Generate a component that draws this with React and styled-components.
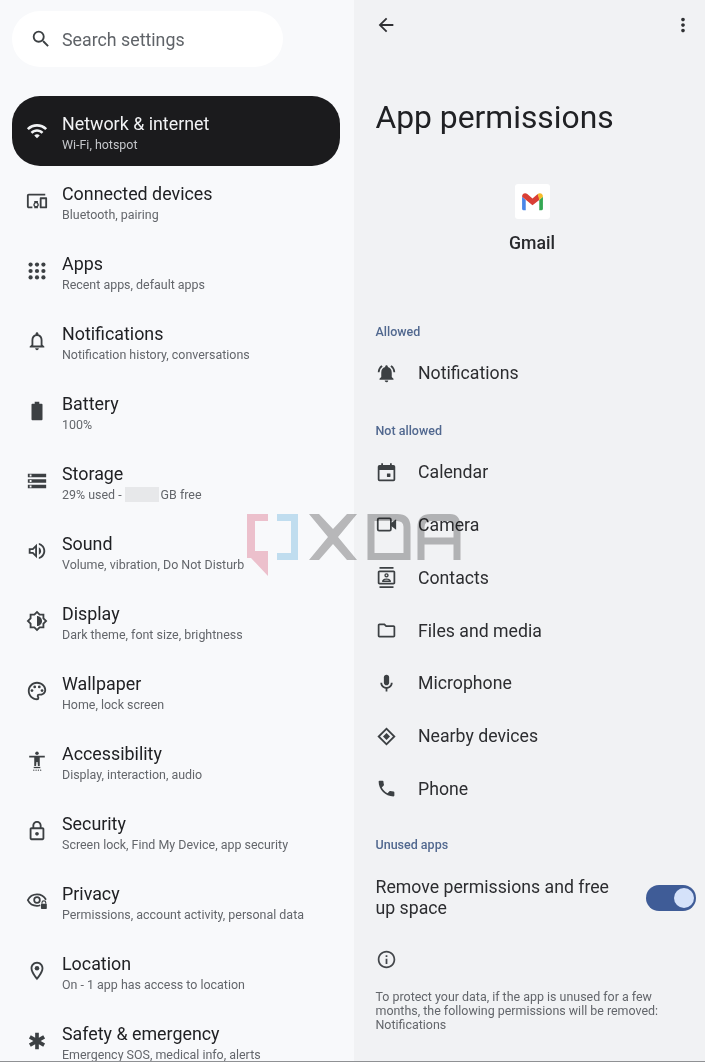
import React from 'react';
import styled, { createGlobalStyle } from 'styled-components';
import {
	MdSearch,
	MdWifi,
	MdOutlineDevicesOther,
	MdNotificationsNone,
	MdStorage,
	MdOutlineVolumeUp,
	MdOutlineBrightness6,
	MdOutlinePalette,
	MdOutlineLock,
	MdOutlineLocationOn,
	MdEmergency,
	MdArrowBack,
	MdMoreVert,
	MdNotificationsActive,
	MdOutlineContacts,
	MdOutlineFolder,
	MdOutlineMic,
	MdPhone,
	MdInfoOutline,
} from 'react-icons/md';

const GlobalStyle = createGlobalStyle`
	html, body {
		margin: 0;
		padding: 0;
		background: #f8f9fb;
	}
	body {
		font-family: Roboto, 'Liberation Sans', sans-serif;
	}
`;

const Screen = styled.div`
	position: relative;
	display: flex;
	width: 705px;
	height: 1062px;
	overflow: hidden;
	box-sizing: border-box;
	border-bottom: 1px solid #8f9194;
	filter: blur(0.35px);
`;

const ListPane = styled.div`
	width: 354px;
	flex-shrink: 0;
	background: #f8f9fb;
	padding: 11px 14px 0 12px;
	box-sizing: border-box;
`;

const SearchBar = styled.div`
	display: flex;
	align-items: center;
	width: 271px;
	height: 56px;
	margin-bottom: 29px;
	padding-left: 18px;
	gap: 10px;
	box-sizing: border-box;
	border-radius: 28px;
	background: #ffffff;
	color: #5f6368;
	font-size: 17.8px;

	svg {
		width: 22px;
		height: 22px;
		color: #3c4043;
	}
`;

const SettingRow = styled.div`
	display: flex;
	align-items: center;
	height: 70px;
	padding-left: 13px;
	gap: 13px;
	box-sizing: border-box;
	border-radius: 28px;
	background: ${(p) => (p.$active ? '#1b1b1d' : 'transparent')};
	color: ${(p) => (p.$active ? '#f1f2f4' : '#202124')};
`;

const RowIcon = styled.span`
	display: flex;
	align-items: center;
	justify-content: center;
	width: 24px;
	height: 24px;
	flex-shrink: 0;
	color: ${(p) => (p.$active ? '#f1f2f4' : '#3c4043')};

	svg {
		width: 22px;
		height: 22px;
	}
`;

const RowText = styled.div`
	display: flex;
	flex-direction: column;
	margin-top: 2px;
`;

const RowTitle = styled.div`
	font-size: 17.85px;
	line-height: 24px;
`;

const RowSub = styled.div`
	display: flex;
	align-items: center;
	font-size: 12.45px;
	line-height: 17px;
	color: ${(p) => (p.$active ? '#c4c6ca' : '#63666b')};
`;

const Redacted = styled.span`
	display: inline-block;
	width: 34px;
	height: 15px;
	margin: 0 2px 0 3px;
	background: #e7e8ea;
`;

const DetailPane = styled.div`
	flex: 1;
	background: #f1f2f4;
	padding-left: 21.5px;
	box-sizing: border-box;
`;

const TopBar = styled.div`
	display: flex;
	align-items: center;
	justify-content: space-between;
	height: 50px;
	margin-left: -0.5px;
	padding-right: 11px;
	color: #303134;

	svg {
		width: 22px;
		height: 22px;
	}
`;

const PageTitle = styled.h1`
	margin: 47px 0 0;
	font-size: 31.8px;
	font-weight: 400;
	line-height: 40px;
	color: #202124;
`;

const AppHeader = styled.div`
	display: flex;
	flex-direction: column;
	align-items: center;
	margin: 47px 0 0 -16.5px;
`;

const AppIconBox = styled.div`
	display: flex;
	align-items: center;
	justify-content: center;
	width: 35px;
	height: 35px;
	border-radius: 3px;
	background: #ffffff;
`;

const AppName = styled.div`
	margin-top: 13px;
	font-size: 17.7px;
	font-weight: 500;
	line-height: 22px;
	color: #28292c;
`;

const SectionLabel = styled.div`
	margin: ${(p) => p.$top}px 0 7px;
	font-size: 12.5px;
	font-weight: 500;
	line-height: 16px;
	color: #51688f;
`;

const PermissionRow = styled.div`
	display: flex;
	align-items: center;
	height: 52.8px;
	gap: 21.5px;
	font-size: 17.7px;
	color: #2c2d30;

	svg {
		width: 21px;
		height: 21px;
		color: #3c4043;
		flex-shrink: 0;
	}
`;

const SwitchRow = styled.div`
	display: flex;
	align-items: center;
	justify-content: space-between;
	margin-top: 24px;
	padding-right: 9px;
`;

const SwitchLabel = styled.div`
	width: 250px;
	font-size: 17.7px;
	line-height: 21px;
	color: #2c2d30;
`;

const Switch = styled.div`
	display: flex;
	align-items: center;
	justify-content: flex-end;
	width: 50px;
	height: 26px;
	padding-right: 2px;
	box-sizing: border-box;
	border-radius: 13px;
	background: #3f5c97;
`;

const SwitchKnob = styled.div`
	width: 20px;
	height: 20px;
	border-radius: 50%;
	background: #d5e2fa;
`;

const InfoIcon = styled.div`
	display: flex;
	margin-top: 30px;
	color: #44474b;

	svg {
		width: 21px;
		height: 21px;
	}
`;

const InfoText = styled.p`
	width: 295px;
	margin: 20px 0 0;
	font-size: 12.45px;
	line-height: 14px;
	color: #63666b;
`;

const Watermark = styled.svg`
	position: absolute;
	left: 245px;
	top: 512px;
	width: 220px;
	height: 68px;
	mix-blend-mode: multiply;
`;

const DotsIcon = () => (
	<svg viewBox='0 0 24 24' fill='currentColor'>
		{[5, 12, 19].map((y) =>
			[5, 12, 19].map((x) => <circle key={`${x}-${y}`} cx={x} cy={y} r='2.3' />)
		)}
	</svg>
);

const BatteryIcon = () => (
	<svg viewBox='0 0 24 24' fill='currentColor'>
		<path d='M9.5 2 H14.5 V4 H17 Q18 4 18 5 V21 Q18 22 17 22 H7 Q6 22 6 21 V5 Q6 4 7 4 H9.5 Z' />
	</svg>
);

const AccessIcon = () => (
	<svg viewBox='0 0 24 24' fill='currentColor'>
		<circle cx='12' cy='3.6' r='1.9' />
		<path d='M3.5 6.4 L20.5 6.4 L20.5 8.3 L15 8.3 L15 17.5 L13 17.5 L12.6 13 L11.4 13 L11 17.5 L9 17.5 L9 8.3 L3.5 8.3 Z' />
		<rect x='8.4' y='18.4' width='7.2' height='1.4' />
		<circle cx='8.5' cy='22' r='0.7' />
		<circle cx='11' cy='22' r='0.7' />
		<circle cx='13.5' cy='22' r='0.7' />
		<circle cx='16' cy='22' r='0.7' />
	</svg>
);

const PrivacyIcon = () => (
	<svg viewBox='0 0 24 24' fill='none'>
		<path d='M15.5 16.6 C14.4 17 13.2 17.2 12 17.2 C7.6 17.2 3.8 14.7 2 11 C3.8 7.3 7.6 4.8 12 4.8 C16.2 4.8 19.9 7.1 21.8 10.6' stroke='currentColor' strokeWidth='1.9' />
		<circle cx='12' cy='11' r='3.1' stroke='currentColor' strokeWidth='1.9' />
		<path d='M17.4 15 v-1 a2.1 2.1 0 0 1 4.2 0 v1' stroke='currentColor' strokeWidth='1.2' />
		<rect x='16.3' y='15' width='6.4' height='5.6' rx='0.8' fill='currentColor' />
	</svg>
);

const CalendarIcon = () => (
	<svg viewBox='0 0 24 24' fill='currentColor'>
		<path fillRule='evenodd' d='M6 1.5 H8 V3.5 H16 V1.5 H18 V3.5 H20 Q22 3.5 22 5.5 V20 Q22 22 20 22 H4 Q2 22 2 20 V5.5 Q2 3.5 4 3.5 H6 Z M4 9 V20 H20 V9 Z' />
		<rect x='12.5' y='13' width='4' height='4' rx='0.5' />
	</svg>
);

const CameraIcon = () => (
	<svg viewBox='0 0 24 24' fill='none'>
		<rect x='2' y='5' width='15' height='14' rx='1.5' stroke='currentColor' strokeWidth='2' />
		<path d='M17 10.5 L23 6 V18 L17 13.5 Z' fill='currentColor' />
	</svg>
);

const NearbyIcon = () => (
	<svg viewBox='0 0 24 24' fill='currentColor'>
		<path fillRule='evenodd' d='M12 1.6 L22.4 12 L12 22.4 L1.6 12 Z M12 4.6 L4.6 12 L12 19.4 L19.4 12 Z' />
		<path d='M12 8 L16 12 L12 16 L8 12 Z' />
	</svg>
);

const GmailMark = () => (
	<svg viewBox='0 0 24 24' width='25' height='25' fill='none'>
		<path d='M2 7.5 L2 19 Q2 20.5 3.5 20.5 L5.5 20.5 L5.5 10.5 Z' fill='#4a86e8' />
		<path d='M18.5 10.5 L18.5 20.5 L20.5 20.5 Q22 20.5 22 19 L22 7.5 Z' fill='#34a853' />
		<path d='M2 7.5 Q2 4 5 4 Q6 4 7 4.8 L12 9 L17 4.8 L18.5 8.5 L18.5 10.5 L12 15.5 L2 7.5 Z' fill='#d93f36' />
		<path d='M17 4.8 Q18 4 19 4 Q22 4 22 7.5 L18.5 10.5 Z' fill='#f5bb2b' />
	</svg>
);

const settings = [
	{ icon: <MdWifi />, title: 'Network & internet', sub: 'Wi-Fi, hotspot', active: true },
	{ icon: <MdOutlineDevicesOther />, title: 'Connected devices', sub: 'Bluetooth, pairing' },
	{ icon: <DotsIcon />, title: 'Apps', sub: 'Recent apps, default apps' },
	{ icon: <MdNotificationsNone />, title: 'Notifications', sub: 'Notification history, conversations' },
	{ icon: <BatteryIcon />, title: 'Battery', sub: '100%' },
	{
		icon: <MdStorage />,
		title: 'Storage',
		sub: (
			<>
				29% used -<Redacted />GB free
			</>
		),
	},
	{ icon: <MdOutlineVolumeUp />, title: 'Sound', sub: 'Volume, vibration, Do Not Disturb' },
	{ icon: <MdOutlineBrightness6 />, title: 'Display', sub: 'Dark theme, font size, brightness' },
	{ icon: <MdOutlinePalette />, title: 'Wallpaper', sub: 'Home, lock screen' },
	{ icon: <AccessIcon />, title: 'Accessibility', sub: 'Display, interaction, audio' },
	{ icon: <MdOutlineLock />, title: 'Security', sub: 'Screen lock, Find My Device, app security' },
	{ icon: <PrivacyIcon />, title: 'Privacy', sub: 'Permissions, account activity, personal data' },
	{ icon: <MdOutlineLocationOn />, title: 'Location', sub: 'On - 1 app has access to location' },
	{ icon: <MdEmergency />, title: 'Safety & emergency', sub: 'Emergency SOS, medical info, alerts' },
];

const blocked = [
	{ icon: <CalendarIcon />, name: 'Calendar' },
	{ icon: <CameraIcon />, name: 'Camera' },
	{ icon: <MdOutlineContacts />, name: 'Contacts' },
	{ icon: <MdOutlineFolder />, name: 'Files and media' },
	{ icon: <MdOutlineMic />, name: 'Microphone' },
	{ icon: <NearbyIcon />, name: 'Nearby devices' },
	{ icon: <MdPhone />, name: 'Phone' },
];

function App() {
	return (
		<Screen>
			<GlobalStyle />
			<ListPane>
				<SearchBar>
					<MdSearch />
					Search settings
				</SearchBar>
				{settings.map((item) => (
					<SettingRow key={item.title} $active={item.active}>
						<RowIcon $active={item.active}>{item.icon}</RowIcon>
						<RowText>
							<RowTitle>{item.title}</RowTitle>
							<RowSub $active={item.active}>{item.sub}</RowSub>
						</RowText>
					</SettingRow>
				))}
			</ListPane>
			<DetailPane>
				<TopBar>
					<MdArrowBack />
					<MdMoreVert />
				</TopBar>
				<PageTitle>App permissions</PageTitle>
				<AppHeader>
					<AppIconBox>
						<GmailMark />
					</AppIconBox>
					<AppName>Gmail</AppName>
				</AppHeader>
				<SectionLabel $top={70}>Allowed</SectionLabel>
				<PermissionRow>
					<MdNotificationsActive />
					Notifications
				</PermissionRow>
				<SectionLabel $top={23}>Not allowed</SectionLabel>
				{blocked.map((item) => (
					<PermissionRow key={item.name}>
						{item.icon}
						{item.name}
					</PermissionRow>
				))}
				<SectionLabel $top={22}>Unused apps</SectionLabel>
				<SwitchRow>
					<SwitchLabel>Remove permissions and free up space</SwitchLabel>
					<Switch>
						<SwitchKnob />
					</Switch>
				</SwitchRow>
				<InfoIcon>
					<MdInfoOutline />
				</InfoIcon>
				<InfoText>
					To protect your data, if the app is unused for a few months, the following permissions will be removed: Notifications
				</InfoText>
			</DetailPane>
			<Watermark viewBox='0 0 220 68'>
				<path d='M2 2 H23 V9 H10 V39 H23 V64 L6 46 H2 Z' fill='#f3c5d0' />
				<path d='M32 2 H53 V48 H32 V41 H46 V9 H32 Z' fill='#c6e3f3' />
				<path d='M64 2 H74 L88 17 L102 2 H112 L93 25 L112 48 H102 L88 32 L74 48 H64 L83 25 Z' fill='#bcbcbc' />
				<path d='M126 5.5 H152 Q162 5.5 162 15 V44.5 H126 Z' stroke='#bcbcbc' strokeWidth='7' fill='none' />
				<path d='M176 48 V15 Q176 5.5 186 5.5 H205 Q212 5.5 212 15 V48 M176 29 H212' stroke='#bcbcbc' strokeWidth='7' fill='none' />
			</Watermark>
		</Screen>
	);
}

export default App;
